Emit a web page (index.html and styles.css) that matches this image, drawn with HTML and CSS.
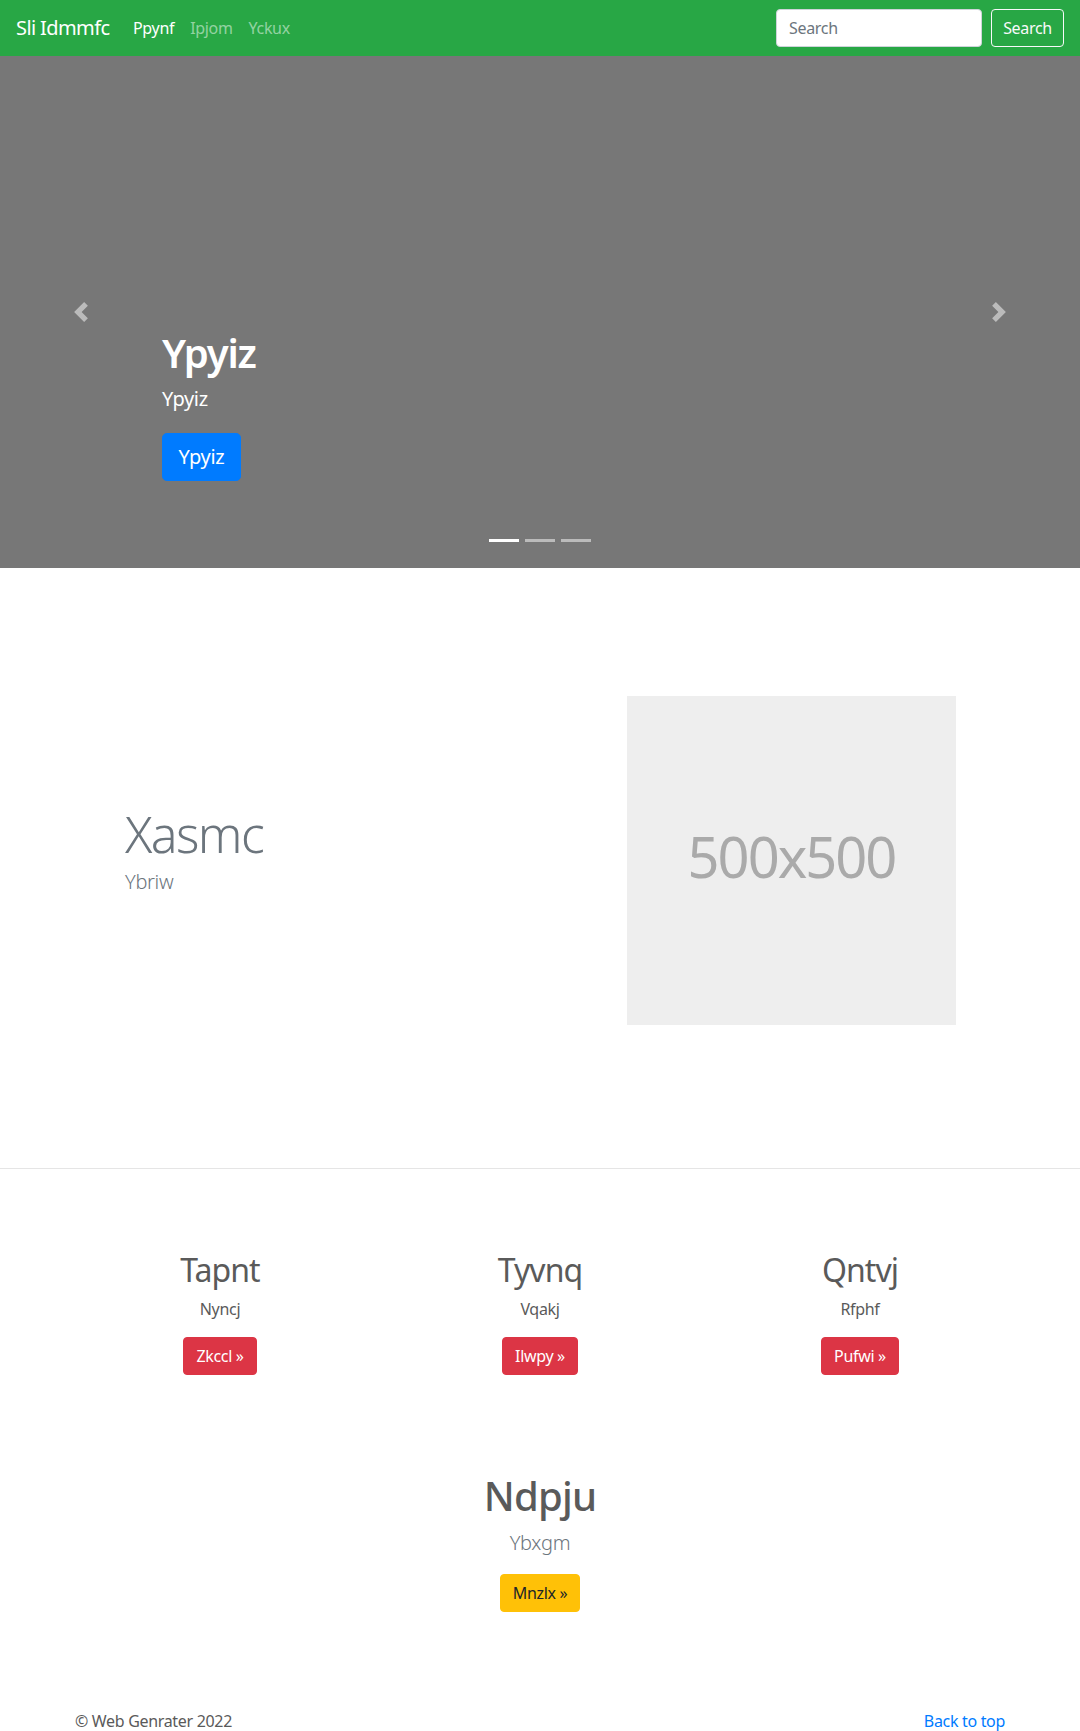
FILE: index.html
```html
<!DOCTYPE html>
<html lang="en">
<head>
<meta charset="utf-8">
<title>Sli Idmmfc</title>
<link rel="stylesheet" href="styles.css">
</head>
<body>
<nav class="navbar">
  <a class="brand" href="#">Sli Idmmfc</a>
  <ul class="nav">
    <li><a class="nav-link active" href="#">Ppynf</a></li>
    <li><a class="nav-link" href="#">Ipjom</a></li>
    <li><a class="nav-link" href="#">Yckux</a></li>
  </ul>
  <form class="search">
    <input class="search-input" type="text" placeholder="Search">
    <button class="search-btn" type="button">Search</button>
  </form>
</nav>

<div class="carousel">
  <div class="caption">
    <h1 class="caption-title">Ypyiz</h1>
    <p class="caption-text">Ypyiz</p>
    <p class="caption-action"><a class="btn-lg-primary" href="#">Ypyiz</a></p>
  </div>
  <a class="control control-prev" href="#">
    <svg width="20" height="20" viewBox="0 0 8 8"><path fill="#fff" d="M5.25 0l-4 4 4 4 1.5-1.5L4.25 4l2.5-2.5L5.25 0z"/></svg>
  </a>
  <a class="control control-next" href="#">
    <svg width="20" height="20" viewBox="0 0 8 8"><path fill="#fff" d="M2.75 0l-1.5 1.5L3.75 4l-2.5 2.5L2.75 8l4-4-4-4z"/></svg>
  </a>
  <ol class="indicators">
    <li class="active"></li>
    <li></li>
    <li></li>
  </ol>
</div>

<section class="featurette">
  <div class="featurette-text">
    <h2 class="featurette-heading">Xasmc</h2>
    <p class="lead">Ybriw</p>
  </div>
  <div class="placeholder">500x500</div>
</section>

<hr class="divider">

<section class="marketing">
  <div class="cols">
    <div class="col">
      <h2 class="col-title">Tapnt</h2>
      <p class="col-text">Nyncj</p>
      <p class="col-action"><a class="btn btn-danger" href="#">Zkccl &raquo;</a></p>
    </div>
    <div class="col">
      <h2 class="col-title">Tyvnq</h2>
      <p class="col-text">Vqakj</p>
      <p class="col-action"><a class="btn btn-danger" href="#">Ilwpy &raquo;</a></p>
    </div>
    <div class="col">
      <h2 class="col-title">Qntvj</h2>
      <p class="col-text">Rfphf</p>
      <p class="col-action"><a class="btn btn-danger" href="#">Pufwi &raquo;</a></p>
    </div>
  </div>
  <div class="highlight">
    <h1 class="highlight-title">Ndpju</h1>
    <p class="lead">Ybxgm</p>
    <p class="col-action"><a class="btn btn-warning" href="#">Mnzlx &raquo;</a></p>
  </div>
</section>

<footer class="footer">
  <p class="footer-copy">&copy; Web Genrater 2022</p>
  <p class="footer-top"><a href="#">Back to top</a></p>
</footer>
</body>
</html>
```

FILE: styles.css
```css
* { box-sizing: border-box; }

html, body {
  margin: 0;
  padding: 0;
}

body {
  font-family: "Segoe UI", "Noto Sans", "Open Sans", sans-serif;
  font-size: 16px;
  line-height: 1.5;
  letter-spacing: -0.02em;
  color: #5a5a5a;
  background: #fff;
}

a { text-decoration: none; }

/* Navbar */
.navbar {
  display: flex;
  align-items: center;
  height: 56px;
  padding: 8px 16px;
  background: #28a745;
}

.brand {
  display: inline-block;
  width: 93px;
  margin-right: 16px;
  padding: 5px 0;
  font-size: 20px;
  line-height: 30px;
  letter-spacing: -0.03em;
  color: #fff;
  white-space: nowrap;
}

.nav {
  display: flex;
  margin: 0;
  padding: 0;
  list-style: none;
  flex: 1;
}

.nav-link {
  display: block;
  padding: 8px;
  color: rgba(255, 255, 255, 0.5);
  font-size: 16px;
  line-height: 24px;
}

.nav-link.active { color: #fff; }

.search {
  display: flex;
  align-items: center;
}

.search-input {
  width: 206px;
  height: 38px;
  margin-right: 9px;
  padding: 6px 12px;
  font-family: inherit;
  font-size: 16px;
  line-height: 24px;
  letter-spacing: -0.02em;
  color: #495057;
  background: #fff;
  border: 1px solid #ced4da;
  border-radius: 4px;
}

.search-input::placeholder { color: #6c757d; }

.search-btn {
  width: 73px;
  height: 38px;
  padding: 6px 0;
  font-family: inherit;
  font-size: 16px;
  line-height: 24px;
  letter-spacing: -0.02em;
  color: #f8f9fa;
  background: transparent;
  border: 1px solid #f8f9fa;
  border-radius: 4px;
}

/* Carousel */
.carousel {
  position: relative;
  height: 512px;
  padding: 273px 15% 0;
  background: #777;
  color: #fff;
}

.caption-title {
  margin: 0 0 8px;
  font-size: 40px;
  line-height: 48px;
  font-weight: 600;
  letter-spacing: -0.03em;
}

.caption-text {
  margin: 0 0 20px;
  font-size: 20px;
  line-height: 28px;
}

.caption-action {
  margin: 0;
  height: 48px;
}

.btn-lg-primary {
  display: inline-block;
  width: 79px;
  padding: 8px 0;
  text-align: center;
  font-size: 20px;
  line-height: 30px;
  color: #fff;
  background: #007bff;
  border: 1px solid #007bff;
  border-radius: 4.8px;
}

.control {
  position: absolute;
  top: 0;
  bottom: 0;
  width: 15%;
  display: flex;
  align-items: center;
  justify-content: center;
  opacity: 0.5;
}

.control svg { display: block; }

.control-prev { left: 0; }
.control-next { right: 0; }

.indicators {
  position: absolute;
  left: 0;
  right: 0;
  bottom: 0;
  display: flex;
  justify-content: center;
  margin: 0 0 16px;
  padding: 0;
  list-style: none;
}

.indicators li {
  width: 30px;
  height: 23px;
  margin: 0 3px;
  border-top: 10px solid transparent;
  border-bottom: 10px solid transparent;
  background: #fff;
  background-clip: padding-box;
  opacity: 0.5;
}

.indicators li.active { opacity: 1; }

/* Featurette */
.featurette {
  display: flex;
  align-items: center;
  justify-content: space-between;
  padding: 128px 124px 143px 125px;
}

.featurette-heading {
  margin: 0 0 8px;
  font-size: 50px;
  line-height: 1;
  font-weight: 300;
  letter-spacing: -1.6px;
  color: #6c757d;
}

.lead {
  margin: 0 0 16px;
  font-size: 20px;
  line-height: 30px;
  font-weight: 300;
  color: #6c757d;
}

.placeholder {
  width: 329px;
  height: 329px;
  display: flex;
  align-items: center;
  justify-content: center;
  background: #eee;
  color: #aaa;
  font-size: 56px;
  line-height: 1;
  letter-spacing: -2px;
  padding-bottom: 9px;
}

.divider {
  margin: 0;
  border: 0;
  border-top: 1px solid rgba(0, 0, 0, 0.1);
}

/* Marketing */
.marketing {
  width: 960px;
  margin: 0 auto;
  padding-top: 82px;
}

.cols {
  display: grid;
  grid-template-columns: repeat(3, 1fr);
}

.col {
  padding: 0 15px;
  margin-bottom: 24px;
  text-align: center;
}

.col-title {
  margin: 0 0 8px;
  font-size: 32px;
  line-height: 38.4px;
  font-weight: 400;
  letter-spacing: -0.03em;
  color: #5a5a5a;
}

.col-text {
  margin: 0 12px 16px;
  font-size: 16px;
  line-height: 24px;
}

.col-action {
  margin: 0 0 16px;
}

.btn {
  display: inline-block;
  padding: 6px 12px;
  font-size: 16px;
  line-height: 24px;
  border: 1px solid transparent;
  border-radius: 4px;
}

.btn-danger {
  color: #fff;
  background: #dc3545;
  border-color: #dc3545;
}

.btn-warning {
  color: #212529;
  background: #ffc107;
  border-color: #ffc107;
}

.highlight {
  margin-top: 57px;
  text-align: center;
}

.highlight-title {
  margin: 0 0 8px;
  font-size: 40px;
  line-height: 48px;
  font-weight: 500;
  letter-spacing: -0.02em;
  color: #5a5a5a;
}

/* Footer */
.footer {
  display: flex;
  justify-content: space-between;
  width: 960px;
  margin: 97px auto 0;
  padding: 0 15px 16px;
}

.footer-copy,
.footer-top {
  margin: 0;
  font-size: 16px;
  line-height: 24px;
}

.footer-top a { color: #007bff; }
```
